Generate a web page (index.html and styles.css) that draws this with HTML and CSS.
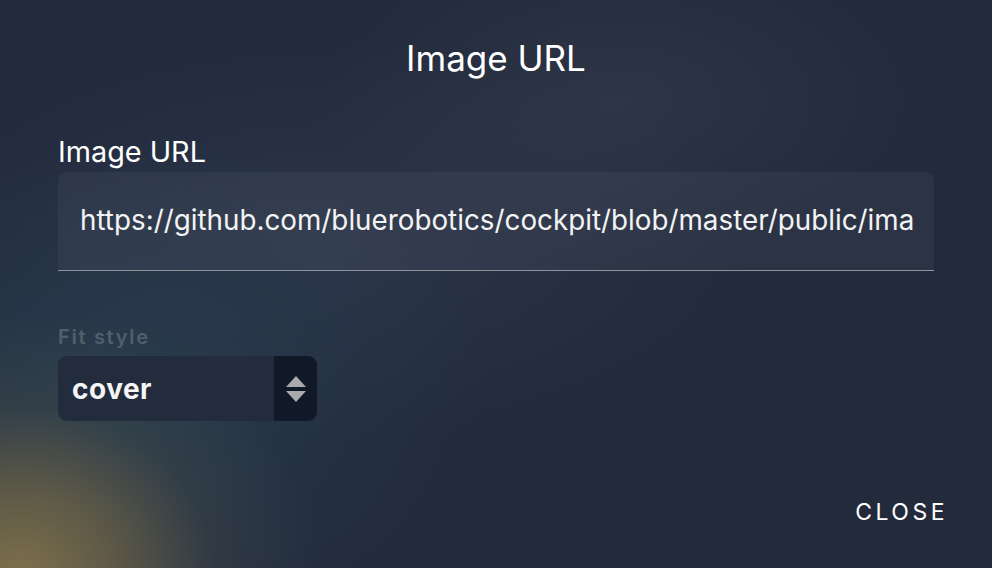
FILE: index.html
```html
<!DOCTYPE html>
<html>
<head>
<meta charset="utf-8">
<link rel="stylesheet" href="styles.css">
</head>
<body>
<div class="dialog">
  <h1 class="title">Image URL</h1>
  <div class="field">
    <label class="field-label">Image URL</label>
    <div class="input">
      <span class="input-text">https://github.com/bluerobotics/cockpit/blob/master/public/images/examples/sample.png</span>
    </div>
  </div>
  <div class="select-field">
    <div class="select-label">Fit style</div>
    <div class="select">
      <span class="select-value">cover</span>
      <span class="select-arrows">
        <svg width="22" height="30" viewBox="0 0 22 30"><path d="M11 2 L21 13 H1 Z" fill="#a9aaad"/><path d="M11 28 L21 17 H1 Z" fill="#a9aaad"/></svg>
      </span>
    </div>
  </div>
  <div class="actions">
    <button class="close-btn">CLOSE</button>
  </div>
</div>
</body>
</html>
```
FILE: styles.css
```css
html, body {
  margin: 0;
  padding: 0;
  height: 100%;
}
body {
  width: 992px;
  height: 568px;
  overflow: hidden;
  font-family: Inter, "Noto Sans", sans-serif;
  color: #ffffff;
  background:
    radial-gradient(ellipse 300px 260px at 20px 575px, rgba(130,115,75,0.95) 0%, rgba(115,104,72,0.75) 30%, rgba(70,76,72,0.35) 65%, rgba(34,42,59,0) 100%),
    radial-gradient(ellipse 380px 260px at 110px 400px, rgba(42,66,82,0.75) 0%, rgba(40,60,78,0.4) 55%, rgba(34,42,59,0) 100%),
    radial-gradient(ellipse 420px 200px at 330px 240px, rgba(55,68,88,0.45) 0%, rgba(34,42,59,0) 100%),
    radial-gradient(ellipse 300px 160px at 620px 100px, rgba(60,66,82,0.45) 0%, rgba(34,42,59,0) 100%),
    #222a3c;
}
.dialog {
  display: flex;
  flex-direction: column;
  height: 568px;
  box-sizing: border-box;
  padding: 0 46px 0 58px;
}
.title {
  margin: 0;
  padding-top: 34px;
  text-align: center;
  font-size: 35px;
  font-weight: 400;
  line-height: 48px;
  margin-left: -12px;
}
.field {
  margin-top: 54px;
  margin-right: 12px;
}
.field-label {
  display: block;
  font-size: 28.8px;
  line-height: 32px;
  color: #fff;
}
.input {
  margin-top: 4px;
  height: 99px;
  box-sizing: border-box;
  background: rgba(255,255,255,0.045);
  border-radius: 8px 8px 0 0;
  border-bottom: 1px solid #8f939c;
  padding: 0 20px 0 22px;
  display: flex;
  align-items: center;
  overflow: hidden;
}
.input-text {
  white-space: nowrap;
  overflow: hidden;
  font-size: 27.8px;
  color: #f2f3f5;
  padding-bottom: 2px;
  width: 834px;
  flex: none;
}
.select-field {
  margin-top: 54px;
  width: 259px;
}
.select-label {
  font-size: 20px;
  font-weight: 600;
  letter-spacing: 1.7px;
  color: rgba(255,255,255,0.2);
  line-height: 24px;
}
.select {
  margin-top: 7px;
  height: 65px;
  display: flex;
  border-radius: 9px;
  overflow: hidden;
  background: #232c3d;
}
.select-value {
  flex: 1;
  display: flex;
  align-items: center;
  padding-left: 14px;
  font-size: 28px;
  font-weight: 700;
  color: #f4f5f7;
  letter-spacing: 0.5px;
}
.select-arrows {
  width: 43px;
  background: #111827;
  display: flex;
  align-items: center;
  justify-content: center;
}
.actions {
  margin-top: auto;
  margin-bottom: 40px;
  display: flex;
  justify-content: flex-end;
}
.close-btn {
  background: none;
  border: none;
  color: #fff;
  font-family: Inter, "Noto Sans", sans-serif;
  font-size: 23px;
  letter-spacing: 3.5px;
  padding: 0;
  line-height: 32px;
  margin-right: -2px;
}
```
